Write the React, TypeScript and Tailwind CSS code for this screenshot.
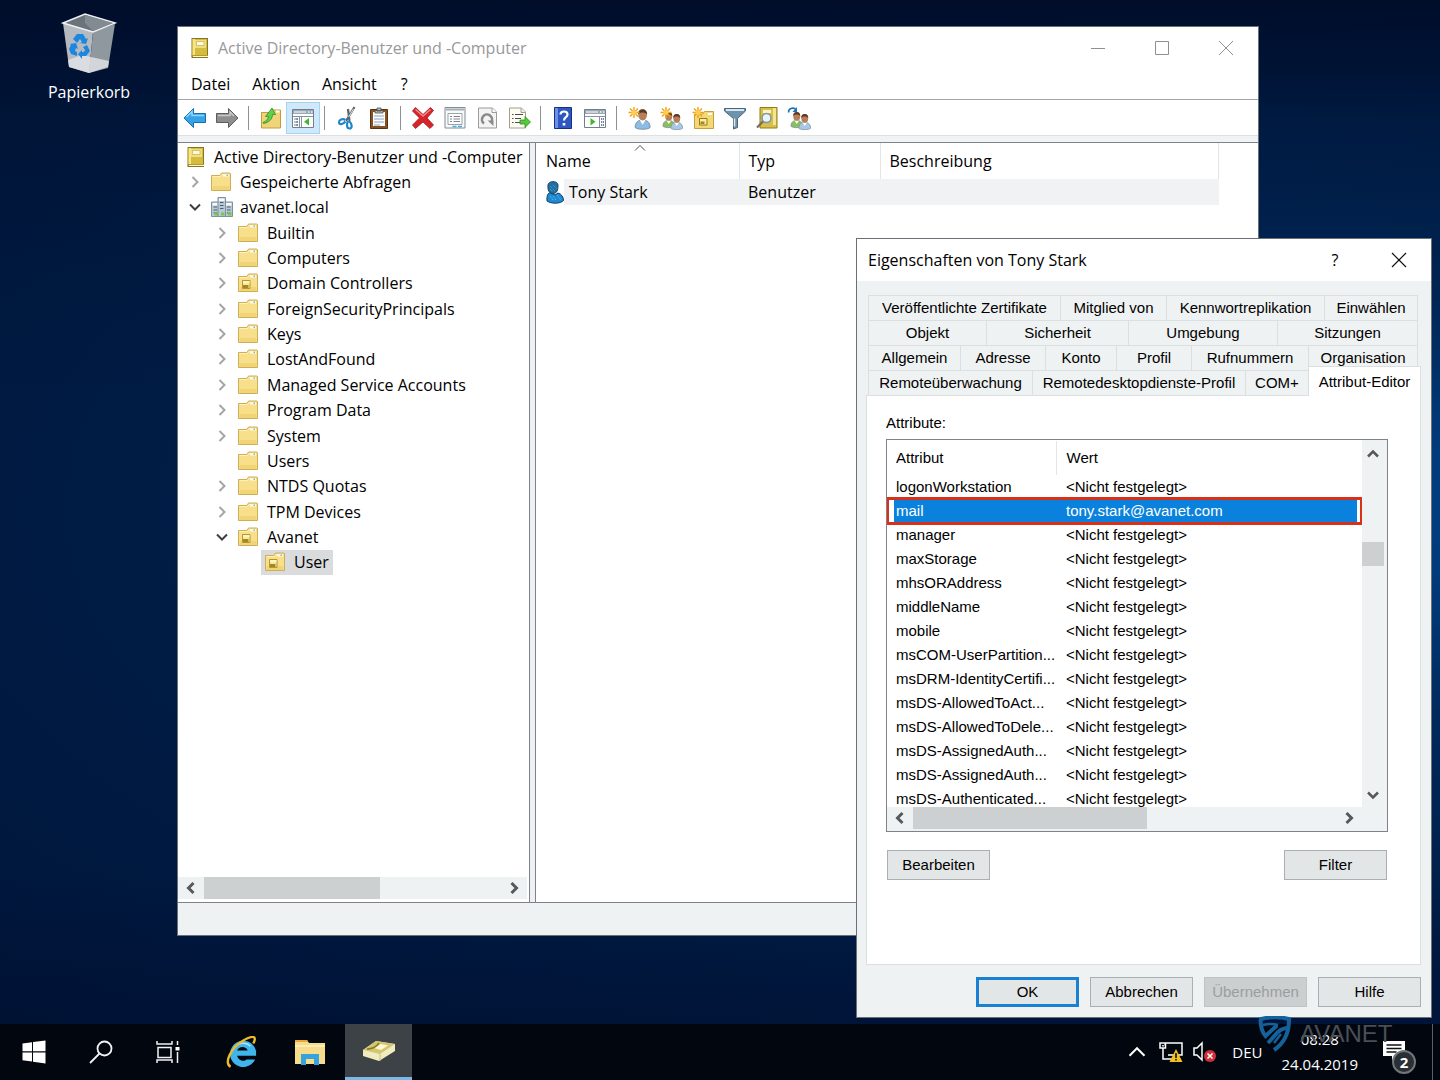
import { ReactNode } from 'react'
import clsx from 'clsx'

type TreeIcon = 'book' | 'folder' | 'ou' | 'domain'

interface TreeItem {
  label: string
  level: number
  icon: TreeIcon
  state?: 'open' | 'closed'
  selected?: boolean
}

interface Tab {
  label: string
  width: string
}

const TREE: TreeItem[] = [
  { label: 'Active Directory-Benutzer und -Computer', level: 0, icon: 'book' },
  { label: 'Gespeicherte Abfragen', level: 1, icon: 'folder', state: 'closed' },
  { label: 'avanet.local', level: 1, icon: 'domain', state: 'open' },
  { label: 'Builtin', level: 2, icon: 'folder', state: 'closed' },
  { label: 'Computers', level: 2, icon: 'folder', state: 'closed' },
  { label: 'Domain Controllers', level: 2, icon: 'ou', state: 'closed' },
  { label: 'ForeignSecurityPrincipals', level: 2, icon: 'folder', state: 'closed' },
  { label: 'Keys', level: 2, icon: 'folder', state: 'closed' },
  { label: 'LostAndFound', level: 2, icon: 'folder', state: 'closed' },
  { label: 'Managed Service Accounts', level: 2, icon: 'folder', state: 'closed' },
  { label: 'Program Data', level: 2, icon: 'folder', state: 'closed' },
  { label: 'System', level: 2, icon: 'folder', state: 'closed' },
  { label: 'Users', level: 2, icon: 'folder' },
  { label: 'NTDS Quotas', level: 2, icon: 'folder', state: 'closed' },
  { label: 'TPM Devices', level: 2, icon: 'folder', state: 'closed' },
  { label: 'Avanet', level: 2, icon: 'ou', state: 'open' },
  { label: 'User', level: 3, icon: 'ou', selected: true }
]

const INDENT = ['pl-0', 'pl-1', 'pl-[31px]', 'pl-[58px]']

const TAB_ROWS: Tab[][] = [
  [
    { label: 'Veröffentlichte Zertifikate', width: 'w-[192px]' },
    { label: 'Mitglied von', width: 'w-[106px]' },
    { label: 'Kennwortreplikation', width: 'w-[158px]' },
    { label: 'Einwählen', width: 'flex-1' }
  ],
  [
    { label: 'Objekt', width: 'w-[118px]' },
    { label: 'Sicherheit', width: 'w-[142px]' },
    { label: 'Umgebung', width: 'w-[149px]' },
    { label: 'Sitzungen', width: 'flex-1' }
  ],
  [
    { label: 'Allgemein', width: 'w-[92px]' },
    { label: 'Adresse', width: 'w-[85px]' },
    { label: 'Konto', width: 'w-[71px]' },
    { label: 'Profil', width: 'w-[75px]' },
    { label: 'Rufnummern', width: 'w-[117px]' },
    { label: 'Organisation', width: 'flex-1' }
  ],
  [
    { label: 'Remoteüberwachung', width: 'w-[164px]' },
    { label: 'Remotedesktopdienste-Profil', width: 'w-[213px]' },
    { label: 'COM+', width: 'w-[63px]' }
  ]
]

const UNSET = '<Nicht festgelegt>'

const ATTRIBUTES = [
  { name: 'logonWorkstation', value: UNSET },
  { name: 'mail', value: 'tony.stark@avanet.com', selected: true },
  { name: 'manager', value: UNSET },
  { name: 'maxStorage', value: UNSET },
  { name: 'mhsORAddress', value: UNSET },
  { name: 'middleName', value: UNSET },
  { name: 'mobile', value: UNSET },
  { name: 'msCOM-UserPartition...', value: UNSET },
  { name: 'msDRM-IdentityCertifi...', value: UNSET },
  { name: 'msDS-AllowedToAct...', value: UNSET },
  { name: 'msDS-AllowedToDele...', value: UNSET },
  { name: 'msDS-AssignedAuth...', value: UNSET },
  { name: 'msDS-AssignedAuth...', value: UNSET },
  { name: 'msDS-Authenticated...', value: UNSET }
]

/* ---------- small icons ---------- */

function Icon({ children, className = 'size-6' }: { children: ReactNode; className?: string }) {
  return (
    <svg viewBox="0 0 24 24" className={clsx('shrink-0', className)} aria-hidden="true">
      {children}
    </svg>
  )
}

function Chevron({ dir, className, stroke = 2 }: { dir: 'up' | 'down' | 'left' | 'right'; className?: string; stroke?: number }) {
  const paths = {
    up: 'M3 10.5 8 5.5l5 5',
    down: 'M3 5.5l5 5 5-5',
    left: 'M10.5 3l-5 5 5 5',
    right: 'M5.5 3l5 5-5 5'
  }
  return (
    <svg viewBox="0 0 16 16" className={clsx('shrink-0', className)} aria-hidden="true">
      <path d={paths[dir]} fill="none" stroke="currentColor" strokeWidth={stroke} />
    </svg>
  )
}

function Book() {
  return (
    <svg viewBox="0 0 18 20" className="h-5 w-[18px] shrink-0" aria-hidden="true">
      <path d="M.5 0H17v20H.5z" fill="#8a7420" />
      <path d="M1 1h15v16H1z" fill="#d4bc3e" />
      <path d="M2 1h2v16H2z" fill="#f3e58c" />
      <path d="M4 2h11v8H4z" fill="#efdf80" />
      <path d="M5.500 3.500h7.500v4H5.500z" fill="#fffbe0" stroke="#bca439" strokeWidth=".6" />
      <path d="M.5 17H17v1.500H.5z" fill="#b59a2c" />
      <path d="M2 18h15v1H2z" fill="#fff7cf" />
    </svg>
  )
}

function Folder({ ou }: { ou?: boolean }) {
  return (
    <svg viewBox="0 0 20 20" className="size-5 shrink-0" aria-hidden="true">
      <path d="M.5 18.500V3.500h8.500l1.500-2.500h8.500l.500.500v17z" fill="#f7df8c" stroke="#cfae58" />
      <path d="M1.500 4.500h8l1.500-2h6.500v1.500" fill="none" stroke="#fff0b8" />
      <path d="M12 2.500h6v2h-6z" fill="#fffbe9" />
      <path d="M15.500 2.500h1.500v1.500h-1.500z" fill="#8cb4b8" />
      <path d="M1.500 14h17v4h-17z" fill="#f1d476" />
      {ou && (
        <>
          <path d="M4.500 7.500h7.500v8H4.500z" fill="#f8e9a0" stroke="#b7962c" />
          <path d="M5 8h6.500v2H5z" fill="#fff6c8" />
          <path d="M5 12h5.500v3H5z" fill="#a8861e" />
        </>
      )}
    </svg>
  )
}

function Domain() {
  return (
    <svg viewBox="0 0 22 20" className="-mr-0.5 h-5 w-[22px] shrink-0" aria-hidden="true">
      {[
        [0.5, 5],
        [14, 5],
        [7, 0.5]
      ].map(([x, y]) => (
        <g key={x}>
          <path d={`M${x} ${y}h7.500v${19.5 - y}h-7.500z`} fill="#b9c8d2" stroke="#7d909c" />
          <path d={`M${x + 1} ${y + 1}h5.500v2.500h-5.500z`} fill="#f5fafc" />
          <path d={`M${x + 2} ${y + 5}h3.500M${x + 2} ${y + 8}h3.500M${x + 2} ${y + 11}h3.500`} stroke="#46627a" />
          <path d={`M${x + 3} 15.500h3.500v3h-3.500z`} fill="#6fcb4c" />
        </g>
      ))}
    </svg>
  )
}

function TreeGlyph({ icon }: { icon: TreeIcon }) {
  if (icon === 'book') return <Book />
  if (icon === 'domain') return <Domain />
  return <Folder ou={icon === 'ou'} />
}

const Arrow = ({ right }: { right?: boolean }) => (
  <Icon>
    <path
      d={right ? 'M23 12 13.500 2.500v5H1.500v9h12v5z' : 'M1 12l9.500-9.500v5h12v9h-12v5z'}
      fill={right ? '#8e8e8e' : '#36a3e8'}
      stroke={right ? '#5c5c5c' : '#1b6fa8'}
    />
    <path d={right ? 'M3 9.500h12V6l4 4' : 'M3.500 11 9 5.500v4h12'} fill="none" stroke={right ? '#c9c9c9' : '#8fd6ff'} strokeWidth="1.500" />
  </Icon>
)

const FolderUp = () => (
  <Icon>
    <path d="M2.500 22V6.500h9l1.500-2.500h8.500v18z" fill="#f0d47a" stroke="#c39b3c" />
    <path d="M17 4.500h3.500v2H17z" fill="#fff" />
    <path d="M4 16.500c3-1 5-3 5.500-6H6.500L13 2l3.500 6.500h-3c0 5-4 8-9 9z" fill="#5fd04a" stroke="#2c8f22" strokeWidth=".8" />
  </Icon>
)

const WindowPane = ({ flip }: { flip?: boolean }) => (
  <Icon>
    <path d="M1.500 3.500h21v18h-21z" fill="#fff" stroke="#6f7f8c" />
    <path d="M2 4h20v4H2z" fill="#9aa9b5" />
    <path d="M3 6h12" stroke="#fff" />
    <path d="M17 6h1.500M20 6h1.500" stroke="#e9f5ff" strokeWidth="1.500" />
    <path d="M2 10.500h20" stroke="#8593a0" />
    <path d={flip ? 'M16.500 11v10' : 'M8.500 11v10M10.500 11v10'} stroke="#8593a0" />
    <path d={flip ? 'M18 13h3M18 16h3M18 19h3' : 'M3.500 13h3.500M3.500 16h3.500M3.500 19h3.500'} stroke="#4c5f70" strokeWidth="1.500" strokeDasharray="1 .7 2" />
    <path d={flip ? 'M7.500 12v7.500l5-3.750z' : 'M18 12v7.500l-5-3.750z'} fill="#43b629" />
  </Icon>
)

const Scissors = () => (
  <Icon>
    <path d="M19.500 1 11 15M13 3l1.500 12" stroke="#59646c" strokeWidth="2.200" />
    <path d="M18.500 3l-5 8" stroke="#dfe7ec" />
    <path d="M10.500 14c-3-2-6.500 0-6.500 2.500s4 2 6.500-1M13 15c-1.500 3-1.500 7.500 1.500 7.500s3-4.500-.5-7.500" fill="#fff" stroke="#1f86c9" strokeWidth="2.200" />
  </Icon>
)

const Clipboard = () => (
  <Icon>
    <path d="M3.500 3.500h17v19h-17z" fill="#865223" stroke="#57340f" />
    <path d="M6 6h12v14H6z" fill="#fbfdff" />
    <path d="M8 4.500h8v2.500H8zM10 2h4v3h-4z" fill="#b7b7b7" stroke="#4f4f4f" strokeWidth=".8" />
    <path d="M7 10h10M7 13h10M7 16h10M7 19h6" stroke="#89a0bf" />
  </Icon>
)

const RedCross = () => (
  <Icon>
    <path d="M4.500 1.500 12 8.500l7.500-7 3 3-6.500 7.500 6.500 7-3.500 3.500-7-6.500-7.500 6.500-3-3.500 7-7-7-7z" fill="#d6242b" stroke="#a3161c" strokeWidth=".8" />
    <path d="M4.500 3.500 12 10l7.500-6.500" fill="none" stroke="#f28a8a" strokeWidth="1.500" />
  </Icon>
)

const PropertySheet = () => (
  <Icon>
    <path d="M2 1.500h20v20.500H2z" fill="#f7f9fa" stroke="#828c94" />
    <path d="M3 3.500h18" stroke="#a4adb4" strokeWidth="2" />
    <path d="M5 7.500h14v11H5z" fill="#fff" stroke="#9aa3aa" />
    <path d="M7 10.500h2M7 13h2M7 15.500h2M10.500 10.500h6.500M10.500 13h6.500M10.500 15.500h6.500" stroke="#7a858e" />
    <path d="M9.500 20.500h4M15 20.500h4" stroke="#3fb1ea" strokeWidth="1.500" />
  </Icon>
)

const RefreshPage = () => (
  <Icon>
    <path d="M3.500 2h14l4 4v16h-18z" fill="#f4f4f4" stroke="#9b9b9b" />
    <path d="M17 2v4.500h4.500" fill="#fff" stroke="#9b9b9b" />
    <path d="M9 17.500a5 5 0 1 1 7-1" fill="none" stroke="#8b8b8b" strokeWidth="2.600" />
    <path d="M12.500 14.500h6V20z" fill="#8b8b8b" />
  </Icon>
)

const ExportList = () => (
  <Icon>
    <path d="M2.500 2h12l4 4v16h-16z" fill="#fdfdf6" stroke="#a29f86" />
    <path d="M14 2v4.500h4.500" fill="#eee" stroke="#a29f86" />
    <path d="M5 8.500h1.500M5 12.500h1.500M5 16.500h1.500M8 8.500h8M8 12.500h6M8 16.500h5" stroke="#4c4c4c" strokeWidth="1.200" />
    <path d="M13 14h5v-3.500l5.500 5.500-5.500 5.500V18h-5z" fill="#58c93c" stroke="#318f1c" strokeWidth=".8" />
  </Icon>
)

const HelpBook = () => (
  <Icon>
    <path d="M3.500 1.500h17v21h-17z" fill="#2f57c4" stroke="#173080" />
    <path d="M4 2h3v20H4z" fill="#6d91e8" />
    <path d="M9.500 8.500c0-4 7-4 7 0 0 3-3.500 2.500-3.500 6" fill="none" stroke="#fff" strokeWidth="2.200" />
    <path d="M11.700 17h2.600v2.600h-2.600z" fill="#fff" />
  </Icon>
)

const Spark = () => (
  <>
    <path d="M7 1v11M1.500 6.500h11M3 2.500l8 8M11 2.500l-8 8" stroke="#f0a11c" strokeWidth="1.400" />
    <circle cx="7" cy="6.500" r="2.500" fill="#ffcf4b" />
  </>
)

const Person = ({ x, y, s, fill }: { x: number; y: number; s: number; fill: string }) => (
  <g transform={`translate(${x} ${y}) scale(${s})`}>
    <path d="M1 17c0-5 3-6.500 6.500-6.500S14 12 14 17c-2 2-11 2-13 0z" fill={fill} stroke="#6f8ea5" strokeWidth=".8" />
    <path d="M5 10.500l2.500 4 2.500-4z" fill="#fff" />
    <ellipse cx="7.500" cy="6" rx="3.800" ry="4.800" fill="#b5805a" />
    <path d="M3.500 5.500C3 0 11.500-1 11.500 5.500 10 3.500 6 3 3.500 5.500z" fill="#5b3a22" />
  </g>
)

const NewUser = () => (
  <Icon>
    <Person x={7} y={2} s={1.15} fill="#8dbbe2" />
    <Spark />
  </Icon>
)

const NewGroup = () => (
  <Icon>
    <Person x={3} y={5} s={0.9} fill="#8cbf5a" />
    <Person x={11} y={7} s={0.9} fill="#a9c8e2" />
    <Spark />
  </Icon>
)

const NewOu = () => (
  <Icon>
    <path d="M3.500 22.500V8h8.500l1.500-2.500h9v17z" fill="#f3d976" stroke="#c5a13f" />
    <path d="M17 7h4v2h-4z" fill="#fff" />
    <path d="M8.500 12.500h7.500v6.500H8.500z" fill="#fbeea9" stroke="#987812" />
    <path d="M9.500 15.500h4v2.500h-4z" fill="#a8861e" />
    <Spark />
  </Icon>
)

const Funnel = () => (
  <Icon>
    <path d="M1.500 2.500h21v2.500l-8 7.500v9l-4 1.500V12.500L1.500 5z" fill="#6f92ab" stroke="#47657b" />
    <path d="M3 4h18" stroke="#d7e6f0" strokeWidth="2" />
    <path d="M11.500 12.500v8" stroke="#dce9f2" strokeWidth="1.500" />
  </Icon>
)

const FindBook = () => (
  <Icon>
    <path d="M5 1.500h17v20.500H5z" fill="#d8be4a" stroke="#937a1d" />
    <path d="M18 2h3v17h-3z" fill="#f4e594" />
    <path d="M8 4h8v3H8z" fill="#fff6c2" />
    <circle cx="11.500" cy="12" r="4.500" fill="#e8f4fb" stroke="#7d95a4" strokeWidth="1.500" />
    <path d="M8 15.500 2 21.500" stroke="#7a6a52" strokeWidth="2.200" />
  </Icon>
)

const MoveGroup = () => (
  <Icon>
    <Person x={3} y={5} s={0.9} fill="#8cbf5a" />
    <Person x={11} y={7} s={0.9} fill="#a9c8e2" />
    <path d="M1.500 6.500c0-4 4-5.500 7-3.500" fill="none" stroke="#1c74b8" strokeWidth="1.600" />
    <path d="M10 1v5H5.500z" fill="#1c74b8" />
  </Icon>
)

const SelectedUser = () => (
  <svg viewBox="0 0 18 23" className="h-[23px] w-[18px] shrink-0" aria-hidden="true">
    <path d="M1 20c-.5-5 1-8 3-8.500L9 14l3-2c3.500 1 5.500 4 5.500 7.500-3 3.500-12.500 3.500-16.500.5z" fill="#1e88d2" stroke="#0d3f6b" />
    <path d="M2 4c0-4.500 10-4.500 10 0 0 5-1 8.500-5 8.500S1.500 9 2 4z" fill="#22709f" stroke="#12466f" />
    <path d="M4 15l3 4m0-4l3 4m1-5l4 5" stroke="#6fc0f2" strokeDasharray="1 1" />
    <path d="M4 5l5 5M4 8l3 3M7 4l4 4" stroke="#5ba6cf" strokeDasharray="1 1" />
  </svg>
)

/* ---------- management console ---------- */

const TOOLBAR: { label: string; icon: ReactNode; active?: boolean }[][] = [
  [
    { label: 'Zurück', icon: <Arrow /> },
    { label: 'Vorwärts', icon: <Arrow right /> }
  ],
  [
    { label: 'Eine Ebene nach oben', icon: <FolderUp /> },
    { label: 'Konsolenstruktur', icon: <WindowPane />, active: true }
  ],
  [
    { label: 'Ausschneiden', icon: <Scissors /> },
    { label: 'Einfügen', icon: <Clipboard /> }
  ],
  [
    { label: 'Löschen', icon: <RedCross /> },
    { label: 'Eigenschaften', icon: <PropertySheet /> },
    { label: 'Aktualisieren', icon: <RefreshPage /> },
    { label: 'Liste exportieren', icon: <ExportList /> }
  ],
  [
    { label: 'Hilfe', icon: <HelpBook /> },
    { label: 'Aktionsbereich', icon: <WindowPane flip /> }
  ],
  [
    { label: 'Neuer Benutzer', icon: <NewUser /> },
    { label: 'Neue Gruppe', icon: <NewGroup /> },
    { label: 'Neue Organisationseinheit', icon: <NewOu /> },
    { label: 'Filter', icon: <Funnel /> },
    { label: 'Suchen', icon: <FindBook /> },
    { label: 'Zu Gruppe hinzufügen', icon: <MoveGroup /> }
  ]
]

function Toolbar() {
  return (
    <div className="flex h-9 items-center border-b border-[#dde1e2] pl-px">
      {TOOLBAR.map((group, i) => (
        <div key={i} className="flex items-center">
          {i > 0 && <div className="mx-[5px] h-6 w-0.5 border-l border-[#8d9194]" />}
          {group.map((tool) => (
            <button
              key={tool.label}
              aria-label={tool.label}
              className={clsx(
                'flex h-[30px] w-8 items-center justify-center',
                tool.active && 'bg-[#cfe8fa] outline outline-[#a5d3f2]'
              )}
            >
              {tool.icon}
            </button>
          ))}
        </div>
      ))}
    </div>
  )
}

function HScroll({ thumb }: { thumb: string }) {
  return (
    <div className="flex h-[22px] shrink-0 items-center bg-[#eff2f2] text-[#55595c]">
      <Chevron dir="left" stroke={3} className="mx-[5px] size-4" />
      <div className="h-full flex-1">
        <div className={clsx('h-full bg-[#cdd0d0]', thumb)} />
      </div>
      <Chevron dir="right" stroke={3} className="mx-[5px] size-4" />
    </div>
  )
}

function ConsoleTree() {
  return (
    <div className="flex w-[352px] shrink-0 flex-col overflow-hidden border-r border-[#7d838b] bg-white">
      <ul className="grid h-[432px] auto-rows-fr pt-px pl-[5px]">
        {TREE.map((item) => (
          <li key={item.label} className={clsx('flex items-center whitespace-nowrap', INDENT[item.level])}>
            {item.level > 0 && (
              <span className="mr-1 w-4">
                {item.state && (
                  <Chevron
                    dir={item.state === 'open' ? 'down' : 'right'}
                    className={clsx('size-4', item.state === 'open' ? 'text-[#3c4043]' : 'text-[#a3a6a8]')}
                  />
                )}
              </span>
            )}
            <button className={clsx('flex h-full items-center gap-[9px] px-1', item.selected && 'bg-[#d9dbdc]')}>
              <TreeGlyph icon={item.icon} />
              {item.label}
            </button>
          </li>
        ))}
      </ul>
      <div className="mt-auto pr-0.5 pb-[3px]">
        <HScroll thumb="w-[176px]" />
      </div>
    </div>
  )
}

function ObjectList() {
  return (
    <div className="flex-1 overflow-hidden border-l border-[#7d838b] bg-white">
      <table className="w-[683px] table-fixed text-left">
        <colgroup>
          <col className="w-[203px]" />
          <col className="w-[141px]" />
          <col />
        </colgroup>
        <thead>
          <tr className="h-9">
            <th className="relative border-r border-[#e2e6e8] pl-[10px] font-normal">
              Name
              <Chevron dir="up" stroke={1} className="absolute top-[-3px] left-24 size-4 text-[#4d5257]" />
            </th>
            <th className="border-r border-[#e2e6e8] pl-[9px] font-normal">Typ</th>
            <th className="border-r border-[#e2e6e8] pl-[9px] font-normal">Beschreibung</th>
          </tr>
        </thead>
        <tbody>
          <tr className="h-[26px]">
            <td>
              <div className="flex h-[26px] items-center pl-[10px] leading-[26px]">
                <SelectedUser />
                <span className="h-full flex-1 bg-[#f0f2f3] pl-[5px]">Tony Stark</span>
              </div>
            </td>
            <td className="bg-[#f0f2f3] pl-[9px]">Benutzer</td>
            <td className="bg-[#f0f2f3]" />
          </tr>
        </tbody>
      </table>
    </div>
  )
}

function ConsoleWindow() {
  return (
    <section className="absolute top-[26px] right-[181px] bottom-[88px] left-[177px] flex flex-col border border-[#6a7078] bg-white text-black">
      <header className="flex h-[41px] shrink-0 items-center pl-[13px]">
        <Book />
        <h1 className="ml-[9px] flex-1 text-[#98999b]">Active Directory-Benutzer und -Computer</h1>
        <button aria-label="Minimieren" className="flex w-16 justify-center">
          <svg viewBox="0 0 16 16" className="size-4">
            <path d="M1 8.500h14" stroke="#8d8f91" />
          </svg>
        </button>
        <button aria-label="Maximieren" className="flex w-16 justify-center">
          <svg viewBox="0 0 16 16" className="size-4">
            <path d="M1.500 1.500h13v13h-13z" fill="none" stroke="#8d8f91" />
          </svg>
        </button>
        <button aria-label="Schließen" className="flex w-16 justify-center">
          <svg viewBox="0 0 16 16" className="size-4">
            <path d="M1 1l14 14M15 1 1 15" stroke="#8d8f91" />
          </svg>
        </button>
      </header>
      <nav className="flex h-8 shrink-0 items-center gap-[22px] border-b border-[#a4a8ab] pl-[13px]">
        <button>Datei</button>
        <button>Aktion</button>
        <button>Ansicht</button>
        <button className="px-0.5">?</button>
      </nav>
      <Toolbar />
      <div className="h-1.5 shrink-0 bg-[#f0f2f4]" />
      <div className="flex min-h-0 flex-1 gap-[5px] border-y border-[#7d838b] bg-[#eef0f4]">
        <ConsoleTree />
        <ObjectList />
      </div>
      <footer className="h-8 shrink-0 bg-[#eff2f2]" />
    </section>
  )
}

/* ---------- property dialog ---------- */

function DialogButton({ children, primary, disabled }: { children: ReactNode; primary?: boolean; disabled?: boolean }) {
  return (
    <button
      disabled={disabled}
      className={clsx(
        'h-[30px] w-[103px]',
        primary && 'border-[3px] border-[#1a80d2] bg-[#e3e6e6]',
        disabled && 'border border-[#c0c4c4] bg-[#cccfcf] text-[#9a9ea0]',
        !primary && !disabled && 'border border-[#abafb1] bg-[#e3e6e6]'
      )}
    >
      {children}
    </button>
  )
}

function DialogTabs() {
  return (
    <div role="tablist" className="mr-[3px] ml-0.5 border-l border-[#dadfdf]">
      {TAB_ROWS.map((row, i) => (
        <div key={i} className="flex h-[25px]">
          {row.map((tab) => (
            <button
              key={tab.label}
              role="tab"
              aria-selected="false"
              className={clsx('border-t border-r border-[#dadfdf] whitespace-nowrap', tab.width)}
            >
              {tab.label}
            </button>
          ))}
          {i === TAB_ROWS.length - 1 && (
            <button
              role="tab"
              aria-selected="true"
              className="relative -mt-1 -mr-[3px] -mb-0.5 flex-1 border-t border-r border-[#dadfdf] bg-white whitespace-nowrap"
            >
              Attribut-Editor
            </button>
          )}
        </div>
      ))}
    </div>
  )
}

function AttributeList() {
  return (
    <div className="flex h-[393px] border border-[#7d838b] bg-[#eff2f2] pr-[3px] pb-0.5">
      <div className="flex min-w-0 flex-1 flex-col">
        <div className="min-h-0 flex-1 overflow-hidden bg-white px-px pt-px">
          <table aria-labelledby="attr-label" className="w-full table-fixed text-left whitespace-nowrap">
            <colgroup>
              <col className="w-[168px]" />
              <col />
            </colgroup>
            <thead>
              <tr className="h-[34px]">
                <th className="border-r border-[#e2e6e8] pl-2 font-normal">Attribut</th>
                <th className="pl-[10px] font-normal">Wert</th>
              </tr>
            </thead>
            <tbody>
              {ATTRIBUTES.map((attr, i) => (
                <tr key={i} className={clsx('h-6', attr.selected && 'text-white outline-3 -outline-offset-1 outline-[#d9301a]')}>
                  <td>
                    <div className={clsx('ml-1.5 h-6 pl-0.5', attr.selected && 'bg-[#0a82dd]')}>{attr.name}</div>
                  </td>
                  <td>
                    <div className={clsx('mr-1 h-6 pl-[10px]', attr.selected && 'bg-[#0a82dd]')}>{attr.value}</div>
                  </td>
                </tr>
              ))}
            </tbody>
          </table>
        </div>
        <HScroll thumb="w-[234px]" />
      </div>
      <div className="flex w-[22px] flex-col items-center pt-1.5 pb-[26px] text-[#55595c]">
        <Chevron dir="up" stroke={2.5} className="size-4" />
        <div className="mt-20 h-6 w-full bg-[#cdd0d0]" />
        <Chevron dir="down" stroke={2.5} className="mt-auto size-4" />
      </div>
    </div>
  )
}

function PropertyDialog() {
  return (
    <section
      role="dialog"
      aria-labelledby="dialog-title"
      className="absolute right-2 bottom-1.5 w-[576px] border border-[#6a7078] bg-[#eff2f2] font-['Liberation_Sans',Arial,sans-serif] text-[15px] leading-6 text-black"
    >
      <header className="flex h-[42px] items-center bg-white pl-[11px] font-['Open_Sans','Noto_Sans',sans-serif] text-base">
        <h2 id="dialog-title" className="flex-1">
          Eigenschaften von Tony Stark
        </h2>
        <button aria-label="Hilfe" className="w-16">
          ?
        </button>
        <button aria-label="Schließen" className="flex w-16 justify-center">
          <svg viewBox="0 0 16 16" className="size-4">
            <path d="M1 1l14 14M15 1 1 15" stroke="#111" strokeWidth="1.200" />
          </svg>
        </button>
      </header>
      <div className="pt-[14px] pr-[10px] pl-[9px]">
        <DialogTabs />
        <div className="border border-[#dadfdf] bg-white pt-[15px] pr-8 pb-[84px] pl-[19px]">
          <p id="attr-label" className="mb-1">
            Attribute:
          </p>
          <AttributeList />
          <div className="mt-[18px] flex justify-between px-px">
            <DialogButton>Bearbeiten</DialogButton>
            <DialogButton>Filter</DialogButton>
          </div>
        </div>
        <div className="flex justify-end gap-[11px] pt-3 pb-[10px]">
          <DialogButton primary>OK</DialogButton>
          <DialogButton>Abbrechen</DialogButton>
          <DialogButton disabled>Übernehmen</DialogButton>
          <DialogButton>Hilfe</DialogButton>
        </div>
      </div>
    </section>
  )
}

/* ---------- desktop and taskbar ---------- */

function RecycleBin() {
  return (
    <button className="absolute top-3 left-[39px] flex w-[100px] flex-col items-center gap-1.5 text-white">
      <svg viewBox="0 0 56 62" className="h-[62px] w-14" aria-hidden="true">
        <path d="M2 11 32 20l-4 41-20-6z" fill="#b4bac0" />
        <path d="M32 20l22-8-7 44-19 5z" fill="#90989f" />
        <path d="M2 11 24 2l30 9-22 9z" fill="#6b747b" stroke="#eef1f3" strokeWidth="1.500" />
        <path d="M24 3v8l8 8 20-8z" fill="#828b92" />
        <path d="M7 48l14-5 27 6-1 6-19 6-20-6z" fill="#e2e6e8" opacity=".8" />
        <g fill="#1d86e0">
          <path d="M12 27l4-5h6l3 5 2-1-2 6-6-1 2-1-2-3-3 4z" />
          <path d="M26 33l3 6-4 5h-4v3l-4-5 4-4v2h2l1-2-2-3z" />
          <path d="M9 32l6-1 2 6-2-1-1 3 2 1v4l-6-2-2-5 2-4z" />
        </g>
      </svg>
      <span>Papierkorb</span>
    </button>
  )
}

function Watermark() {
  return (
    <div className="pointer-events-none absolute right-9 bottom-7 flex w-[146px] items-center gap-2">
      <svg viewBox="0 0 34 36" className="h-9 w-[34px] shrink-0" fill="none" stroke="#14619c" strokeWidth="4" aria-hidden="true">
        <path d="M1 3.500Q17-1 33 3.500" />
        <path d="M2.500 4Q2.500 14 7.500 20L19 9.500" />
        <path d="M5 9q8-2 15 0" strokeWidth="2.500" />
        <path d="M10 27 20 16q4-4 11-4" />
        <path d="M31 4Q31 24 16 34" />
        <path d="M16 27l7-9" strokeWidth="2.500" />
      </svg>
      <span className="font-['Liberation_Sans',Arial,sans-serif] text-2xl text-[#4a4e55]">AVANET</span>
    </div>
  )
}

function Taskbar() {
  return (
    <footer className="flex h-14 shrink-0 items-center bg-[#02070f] text-[15px] text-white">
      <button aria-label="Start" className="flex h-full w-[67px] items-center justify-center">
        <svg viewBox="0 0 24 24" className="size-6" fill="#fff">
          <path d="M.5 3.500 10 2.300v9H.5zM11 2.100 23.500.5v10.800H11zM.5 12.500H10v9L.5 20.200zM11 12.500h12.500v11L11 21.700z" />
        </svg>
      </button>
      <button aria-label="Suche" className="flex h-full w-[67px] items-center justify-center">
        <svg viewBox="0 0 24 24" className="size-6" fill="none" stroke="#f2f2f2" strokeWidth="1.800">
          <circle cx="15.500" cy="8.500" r="7" />
          <path d="M10.500 13.500 1 23" />
        </svg>
      </button>
      <button aria-label="Taskansicht" className="flex h-full w-[67px] items-center justify-center">
        <svg viewBox="0 0 24 24" className="size-6" fill="none" stroke="#f2f2f2" strokeWidth="1.500">
          <path d="M1 1v3h15V1M2 7.500h13v10H2zM1 23v-3h15v3M21.500 1v4M21.500 12v11" />
          <path d="M19.500 7h4v3.500h-4z" fill="#fff" stroke="none" />
        </svg>
      </button>
      <button aria-label="Internet Explorer" className="ml-1.5 flex h-full w-[67px] items-center justify-center">
        <svg viewBox="0 0 34 34" className="size-8" fill="none">
          <path d="M32 25a14 14 0 1 1 1-9v5H13c1 5 7 7 10 4z" fill="#3fb5ec" />
          <path d="M13 15.500h11c-1-5-10-5-11 0z" fill="#02070f" />
          <path d="M9 14c2-6 13-9 18-3" stroke="#a8e4ff" strokeWidth="1.500" />
          <path d="M6 32.500C-2 29 7 12 19 5s15-4 11 3" stroke="#efb929" strokeWidth="2.500" />
        </svg>
      </button>
      <button aria-label="Explorer" className="ml-0.5 flex h-full w-[67px] items-center justify-center">
        <svg viewBox="0 0 32 28" className="h-7 w-8">
          <path d="M1 2h12l2 3h16v21H1z" fill="#f7dc8b" />
          <path d="M1 2h12l1 2H1z" fill="#e5a93c" />
          <path d="M1 8h30" stroke="#fdecb3" strokeWidth="2" />
          <path d="M7 27V16h18v11h-5v-6h-8v6z" fill="#35a3dd" />
        </svg>
      </button>
      <button
        aria-label="Active Directory-Benutzer und -Computer"
        className="ml-0.5 flex h-full w-[67px] items-center justify-center border-b-3 border-[#7bb9e6] bg-[#3d4247]"
      >
        <svg viewBox="0 0 34 24" className="h-6 w-[34px]">
          <path d="M1 11 14 2l19 3v7L17 22 1 17z" fill="#f1ecc0" />
          <path d="M1 11 14 2l19 3-15 10z" fill="#d3c573" />
          <path d="M12 9l7-4 7 1.500-7 4.500z" fill="#fff9cf" />
          <path d="M5 10q8 0 12-6" fill="none" stroke="#8b7c1d" strokeWidth="1.500" />
          <path d="M18 15v7" fill="none" stroke="#c9be7c" />
        </svg>
      </button>

      <div className="ml-auto flex h-full items-center">
        <button aria-label="Ausgeblendete Symbole" className="mr-[10px]">
          <Chevron dir="up" stroke={1.3} className="size-6" />
        </button>
        <svg viewBox="0 0 24 22" className="mr-[10px] h-[22px] w-6" fill="none" stroke="#fff" strokeWidth="1.500" aria-label="Netzwerk">
          <path d="M7 2h16v12H9M1 2h5.500v5H1zM4 7v11h9" />
          <path d="M3 4l1 1.500 1.500-2" strokeWidth="1" />
          <path d="M17 8l6.500 13h-13z" fill="#f4c01c" stroke="none" />
          <path d="M17 12v5M17 18v1.500" stroke="#000" />
        </svg>
        <svg viewBox="0 0 24 22" className="h-[22px] w-6" fill="none" stroke="#fff" strokeWidth="1.500" aria-label="Ton aus">
          <path d="M1 7h3l5-5v17l-5-5H1z" />
          <circle cx="17" cy="15" r="6" fill="#d22f3b" stroke="none" />
          <path d="M14.500 12.500l5 5M19.500 12.500l-5 5" />
        </svg>
        <button className="ml-[15px]">DEU</button>
        <div className="ml-[19px] text-center leading-[25px]">
          <p>08:28</p>
          <p>24.04.2019</p>
        </div>
        <button aria-label="Benachrichtigungen" className="relative mr-[7px] ml-6 h-9 w-8">
          <svg viewBox="0 0 24 22" className="absolute top-1.5 left-0 h-[22px] w-6">
            <path d="M1 1h22v15h-9l-4 5v-5H1z" fill="#fff" />
            <path d="M4.500 5h15M4.500 8.500h15M4.500 12h10" stroke="#111" strokeWidth="1.500" />
          </svg>
          <span className="absolute top-4 left-[10px] flex size-6 items-center justify-center rounded-full border-2 border-[#70767a] bg-[#2a2f33] font-bold">
            2
          </span>
        </button>
        <div className="ml-[11px] h-full w-px bg-[#5d6166]" />
        <div className="w-[7px]" />
      </div>
    </footer>
  )
}

export default function App() {
  return (
    <main className="relative flex h-screen flex-col overflow-hidden bg-[#001033] font-['Open_Sans','Noto_Sans',sans-serif] text-base leading-6">
      <div className="relative flex-1 bg-[linear-gradient(180deg,#000d2b_0%,#00102e55_12%,#00102e00_40%,#00102e00_85%,#000f3088_100%),radial-gradient(ellipse_at_85%_50%,#004a96_0%,#00285a_32%,#001c45_62%,#001539_100%)]">
        <RecycleBin />
        <ConsoleWindow />
        <PropertyDialog />
      </div>
      <Taskbar />
      <Watermark />
    </main>
  )
}
